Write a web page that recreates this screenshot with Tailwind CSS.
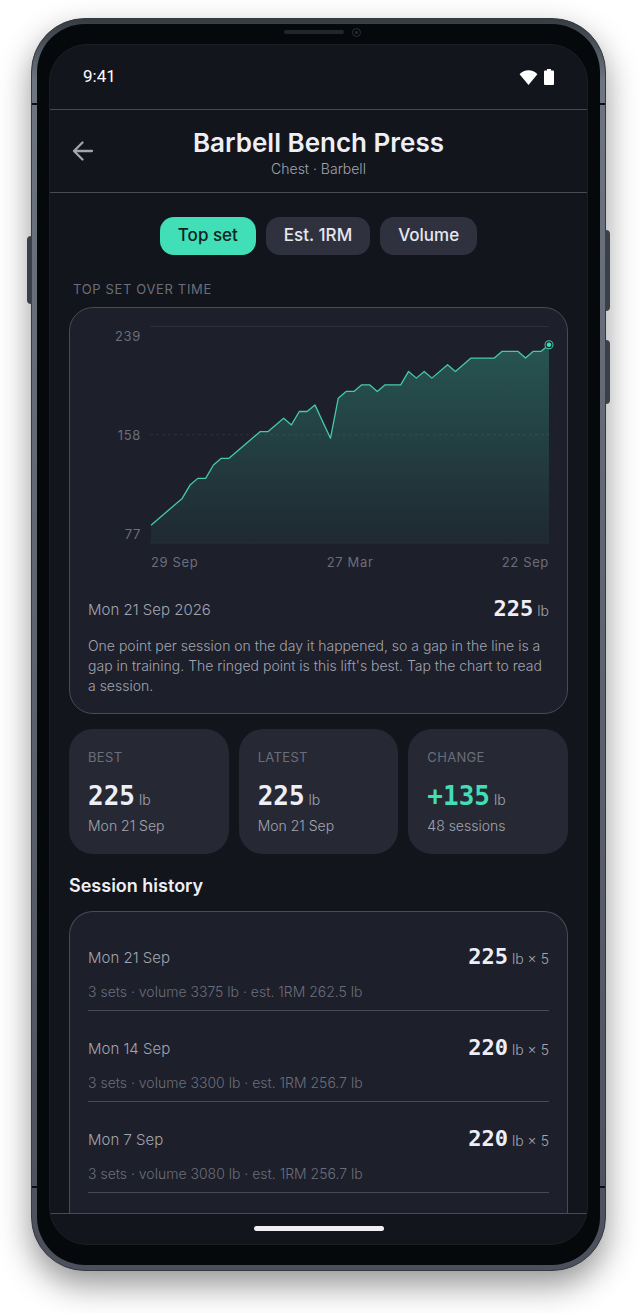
<!DOCTYPE html>
<html lang="en">
<head>
  <meta charset="UTF-8" />
  <meta name="viewport" content="width=device-width, initial-scale=1" />
  <title>Barbell Bench Press</title>
  <script src="https://cdn.jsdelivr.net/npm/@tailwindcss/browser@4"></script>
</head>
<body class="bg-white pt-[18px] pb-11 pl-[31px] pr-[34px] font-['Inter',sans-serif] font-light text-[#a2a4b0]">

  <!-- phone body -->
  <div class="relative rounded-[54px] border border-[#343a42] bg-[#69717d] bg-linear-to-b from-[#363c41] from-0% via-[#6d7581] via-5% to-[#4c505c] p-[5px] shadow-[0_14px_32px_rgba(0,0,0,0.42)]">
    <!-- side keys -->
    <div class="absolute -left-[5px] top-[217px] h-[68px] w-[5px] rounded-l-sm bg-[#3a4049]"></div>
    <div class="absolute -right-[5px] top-[211px] h-[81px] w-[5px] rounded-r-sm bg-[#3a4049]"></div>
    <div class="absolute -right-[5px] top-[321px] h-[64px] w-[5px] rounded-r-sm bg-[#3a4049]"></div>
    <!-- antenna seams -->
    <div class="absolute inset-x-0 top-[84px] h-[2px] bg-[#0b0e12]"></div>
    <div class="absolute inset-x-0 bottom-[82px] h-[2px] bg-[#0b0e12]"></div>

    <div class="relative rounded-[48px] bg-[#06090c] px-3 py-5">
      <!-- speaker and camera -->
      <div class="absolute inset-x-0 top-0 flex h-4 items-center justify-center gap-2 pl-2">
        <div class="h-1 w-[60px] rounded-full bg-[#22262a]"></div>
        <div class="flex size-[9px] items-center justify-center rounded-full border border-[#2c3136]">
          <div class="size-[3px] rounded-full bg-[#2c3136]"></div>
        </div>
      </div>

      <!-- screen -->
      <div class="overflow-hidden rounded-[38px] border border-[#1b1f23] bg-[#12151c]">
        <div class="flex h-[65px] items-center justify-between border-b border-[#484b56] px-[33px]">
          <span class="font-['Roboto',sans-serif] text-[17px] font-normal text-white">9:41</span>
          <div class="flex items-center gap-[6px]">
            <svg class="h-[15px] w-[19px]" viewBox="0 0 19 15" fill="#fff"><path d="M9.500 15L.6 4.300C3 1.700 6 .3 9.500 .3s6.500 1.400 8.900 4z" /></svg>
            <svg class="h-4 w-[10px]" viewBox="0 0 10 16" fill="#fff"><path d="M3 0h4v1.600h2a1 1 0 0 1 1 1V15a1 1 0 0 1-1 1H1a1 1 0 0 1-1-1V2.600a1 1 0 0 1 1-1h2z" /></svg>
          </div>
        </div>

        <header class="grid h-[83px] grid-cols-[1fr_auto_1fr] items-center border-b border-[#484b56] px-[21px]">
          <button type="button" aria-label="Back" class="flex size-6 items-center justify-center">
            <svg class="size-6" viewBox="0 0 24 24" fill="none" stroke="#a2a4b0" stroke-width="2.300" stroke-linecap="round" stroke-linejoin="round"><path d="M21 12H3M11.500 3.500L3 12l8.500 8.500" /></svg>
          </button>
          <div class="pt-1 text-center">
            <h1 class="text-[26px] leading-8 font-semibold text-[#eeeff6]">Barbell Bench Press</h1>
            <p class="text-[14px] leading-5">Chest · Barbell</p>
          </div>
        </header>

        <main class="px-[19px] pt-6">
          <div class="flex justify-center gap-[10px] text-[17px] font-medium text-[#e6e7f0]">
            <button type="button" class="h-[38px] rounded-[14px] bg-[#40dfb7] px-[18px] text-[#12231f]">Top set</button>
            <button type="button" class="h-[38px] rounded-[14px] bg-[#2f323e] px-[18px]">Est. 1RM</button>
            <button type="button" class="h-[38px] rounded-[14px] bg-[#2f323e] px-[18px]">Volume</button>
          </div>

          <h2 class="mt-6 px-1 text-[13px] leading-5 font-normal tracking-wider text-[#6b6e7a]">TOP SET OVER TIME</h2>

          <section class="mt-2 rounded-3xl border border-[#484b56] bg-[#1d1f2a] px-[18px] pt-[18px] pb-[17px]">
            <div class="flex gap-[9px] text-[13px] leading-5 font-normal tracking-wider text-[#6b6e7a]">
              <div class="flex w-[53px] flex-col justify-between text-right">
                <span>239</span>
                <span>158</span>
                <span>77</span>
              </div>
              <svg id="chart" class="block h-auto min-w-0 flex-1 overflow-visible" viewBox="0 0 398 217" fill="none">
                <defs>
                  <linearGradient id="fill" x1="0" y1="0" x2="0" y2="1">
                    <stop offset="0" stop-color="#40dfb7" stop-opacity="0.28" />
                    <stop offset="1" stop-color="#40dfb7" stop-opacity="0.05" />
                  </linearGradient>
                </defs>
                <path d="M0 .5h398M0 216.500h398" stroke="#2d303b" />
                <path d="M0 108.500h398" stroke="#2f323d" stroke-dasharray="3 3" />
                <path id="area" fill="url(#fill)" />
                <path id="line" stroke="#45c9a9" stroke-width="1.300" stroke-linejoin="round" />
                <circle cx="398" cy="18.700" r="4" fill="#1d1f2a" stroke="#45c9a9" />
                <circle cx="398" cy="18.700" r="2.300" fill="#40dfb7" />
              </svg>
            </div>
            <div class="mt-2 flex justify-between pl-[63px] text-[13px] leading-5 font-normal tracking-wider text-[#6b6e7a]">
              <span>29 Sep</span>
              <span>27 Mar</span>
              <span>22 Sep</span>
            </div>
            <div class="mt-[22px] flex items-center justify-between leading-[30px]">
              <span class="text-[15px]">Mon 21 Sep 2026</span>
              <span class="text-[14px]"><b class="font-['DejaVu_Sans_Mono',monospace] text-[22px] font-bold text-[#eeeff6]">225</b> lb</span>
            </div>
            <p class="mt-[10px] text-[14px] leading-5">One point per session on the day it happened, so a gap in the line is a gap in training. The ringed point is this lift's best. Tap the chart to read a session.</p>
          </section>

          <div class="mt-[15px] grid grid-cols-3 gap-[10px]">
            <div class="rounded-3xl bg-[#262934] px-[19px] py-[18px]">
              <h3 class="text-[13px] leading-5 font-normal tracking-wide text-[#6b6e7a]">BEST</h3>
              <p class="mt-[13px] text-[14px] leading-8"><b class="font-['DejaVu_Sans_Mono',monospace] text-[26px] font-bold text-[#eeeff6]">225</b> lb</p>
              <p class="text-[14px] leading-5">Mon 21 Sep</p>
            </div>
            <div class="rounded-3xl bg-[#262934] px-[19px] py-[18px]">
              <h3 class="text-[13px] leading-5 font-normal tracking-wide text-[#6b6e7a]">LATEST</h3>
              <p class="mt-[13px] text-[14px] leading-8"><b class="font-['DejaVu_Sans_Mono',monospace] text-[26px] font-bold text-[#eeeff6]">225</b> lb</p>
              <p class="text-[14px] leading-5">Mon 21 Sep</p>
            </div>
            <div class="rounded-3xl bg-[#262934] px-[19px] py-[18px]">
              <h3 class="text-[13px] leading-5 font-normal tracking-wide text-[#6b6e7a]">CHANGE</h3>
              <p class="mt-[13px] text-[14px] leading-8"><b class="font-['DejaVu_Sans_Mono',monospace] text-[26px] font-bold text-[#40dfb7]">+135</b> lb</p>
              <p class="text-[14px] leading-5">48 sessions</p>
            </div>
          </div>

          <h2 class="mt-5 text-[18px] leading-6 font-semibold text-[#eeeff6]">Session history</h2>

          <ul class="mt-[13px] rounded-t-3xl border border-b-0 border-[#484b56] bg-[#1d1f2a] px-[18px] pt-2 pb-5">
            <li class="border-b border-[#484b56] pt-[22px] pb-2">
              <div class="flex items-center justify-between leading-[30px]">
                <span class="text-[15px]">Mon 21 Sep</span>
                <span class="text-[14px]"><b class="font-['DejaVu_Sans_Mono',monospace] text-[22px] font-bold text-[#eeeff6]">225</b> lb × 5</span>
              </div>
              <p class="mt-2 text-[14px] leading-5 text-[#6b6e7a]">3 sets · volume 3375 lb · est. 1RM 262.5 lb</p>
            </li>
            <li class="border-b border-[#484b56] pt-[22px] pb-2">
              <div class="flex items-center justify-between leading-[30px]">
                <span class="text-[15px]">Mon 14 Sep</span>
                <span class="text-[14px]"><b class="font-['DejaVu_Sans_Mono',monospace] text-[22px] font-bold text-[#eeeff6]">220</b> lb × 5</span>
              </div>
              <p class="mt-2 text-[14px] leading-5 text-[#6b6e7a]">3 sets · volume 3300 lb · est. 1RM 256.7 lb</p>
            </li>
            <li class="border-b border-[#484b56] pt-[22px] pb-2">
              <div class="flex items-center justify-between leading-[30px]">
                <span class="text-[15px]">Mon 7 Sep</span>
                <span class="text-[14px]"><b class="font-['DejaVu_Sans_Mono',monospace] text-[22px] font-bold text-[#eeeff6]">220</b> lb × 5</span>
              </div>
              <p class="mt-2 text-[14px] leading-5 text-[#6b6e7a]">3 sets · volume 3080 lb · est. 1RM 256.7 lb</p>
            </li>
          </ul>
        </main>

        <div class="flex h-[31px] items-center justify-center border-t border-[#484b56]">
          <div class="h-[5px] w-[130px] rounded-full bg-[#f1eff3]"></div>
        </div>
      </div>
    </div>
  </div>

  <script>
    // [week, top set in lb]
    const sets = [
      [0, 90], [4, 110], [5, 120], [6, 125], [7, 125], [8, 135], [9, 140], [10, 140], [14, 160], [15, 160],
      [17, 170], [18, 165], [19, 175], [20, 175], [21, 180], [23, 155], [24, 185], [25, 190], [26, 190],
      [27, 195], [28, 195], [29, 190], [30, 195], [32, 195], [33, 205], [34, 200], [35, 205], [36, 200],
      [38, 210], [39, 205], [41, 215], [44, 215], [45, 220], [47, 220], [48, 215], [49, 220], [50, 220], [51, 225],
    ];
    const points = sets.map(([week, lb]) => `${(1 + week * 397 / 51).toFixed(1)} ${((239 - lb) * 216 / 162).toFixed(1)}`);

    document.getElementById("line").setAttribute("d", "M" + points.join("L"));
    document.getElementById("area").setAttribute("d", "M" + points.join("L") + "V216H1Z");
  </script>
</body>
</html>
